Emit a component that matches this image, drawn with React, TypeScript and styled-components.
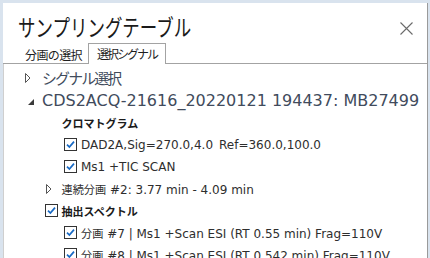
import React from "react";
import styled, { createGlobalStyle } from "styled-components";

const GlobalStyle = createGlobalStyle`
  html, body { margin: 0; padding: 0; }
  body {
    background: #d9e3ee;
    font-family: "DejaVu Sans", "Noto Sans CJK JP", sans-serif;
    overflow: hidden;
  }
`;

const Window = styled.div`
  margin: 3px 0 0 3px;
  width: 424px;
  height: 255px;
  background: #fff;
  border-right: 1px solid #9a9a9a;
  display: flex;
  flex-direction: column;
  overflow: hidden;
`;

const Header = styled.header`
  height: 40px;
  box-sizing: border-box;
  padding: 9px 14px 0 15px;
  display: flex;
  align-items: flex-start;
  justify-content: space-between;
`;

const Title = styled.h1`
  margin: 0;
  font: 400 23px/28px "Noto Sans CJK JP", sans-serif;
  color: #1a1a1a;
  transform: scaleX(0.76);
  transform-origin: left center;
`;

const CloseButton = styled.button`
  border: 0;
  background: none;
  padding: 0;
  margin-top: 9px;
  width: 14px;
  height: 14px;
  display: flex;
  align-items: center;
  justify-content: center;
`;

const TabStrip = styled.div`
  height: 21px;
  box-sizing: border-box;
  padding-left: 13px;
  display: flex;
  align-items: flex-end;
  border-bottom: 1px solid #a3a3a3;
`;

const Tab = styled.div<{ $active?: boolean }>`
  box-sizing: border-box;
  height: ${(p) => (p.$active ? "21px" : "19px")};
  margin-left: ${(p) => (p.$active ? "-3px" : "0")};
  margin-bottom: ${(p) => (p.$active ? "-1px" : "0")};
  padding: 0 8px;
  border: 1px solid ${(p) => (p.$active ? "#a3a3a3" : "transparent")};
  border-bottom: 0;
  background: #fff;
  font: 400 12px/19px "Noto Sans CJK JP", sans-serif;
  letter-spacing: ${(p) => (p.$active ? "-2px" : "-0.6px")};
  color: #1e1e1e;
  position: relative;
`;

const Tree = styled.ul`
  flex: 1;
  list-style: none;
  margin: 0;
  padding: 2.5px 0 0;
  border-left: 1px solid #cfcfcf;
  overflow: hidden;
`;

const Row = styled.li<{ $level: number; $top?: boolean }>`
  height: ${(p) => (p.$top ? "22.5px" : "22px")};
  padding-left: ${(p) => 18 + p.$level * 19.5}px;
  display: flex;
  align-items: center;
  white-space: nowrap;
  font-size: ${(p) => (p.$top ? "16px" : "12px")};
  color: ${(p) => (p.$top ? "#414b5c" : "#2e2e2e")};
`;

const Lead = styled.span`
  width: 20px;
  flex-shrink: 0;
  display: flex;
  align-items: center;
`;

const Heading = styled.span`
  font: 700 11px "Noto Sans CJK JP", sans-serif;
  color: #1a1a1a;
`;

const Ja = styled.span<{ $tight?: number }>`
  font-size: 0.93em;
  letter-spacing: ${(p) => p.$tight ?? 0}px;
`;

const Extra = styled.span`
  margin-left: 6px;
`;

const Box = styled.span`
  margin-left: 3px;
  width: 13px;
  height: 13px;
  box-sizing: border-box;
  border: 1px solid #333;
  background: #fff;
  display: flex;
  align-items: center;
  justify-content: center;
`;

const Check = () => (
  <Box>
    <svg width="11" height="11" viewBox="0 0 11 11">
      <path d="M2 5.6 L4.4 8 L9 2.6" fill="none" stroke="#1769c4" strokeWidth="1.7" />
    </svg>
  </Box>
);

const Collapsed = ({ x = 3 }: { x?: number }) => (
  <svg width="6" height="10" viewBox="0 0 6 10" style={{ marginLeft: x }}>
    <polygon points="0.5,0.5 5,5 0.5,9.5" fill="#fff" stroke="#555" strokeWidth="1" />
  </svg>
);

const Expanded = () => (
  <svg width="6" height="6" viewBox="0 0 6 6" style={{ marginLeft: 6, marginTop: 3 }}>
    <polygon points="6,0 6,6 0,6" fill="#3a3a3a" />
  </svg>
);

export default function App() {
  return (
    <>
      <GlobalStyle />
      <Window>
        <Header>
          <Title>サンプリングテーブル</Title>
          <CloseButton aria-label="閉じる">
            <svg width="13" height="13" viewBox="0 0 13 13">
              <path d="M0.5 0.5 L12.5 12.5 M12.5 0.5 L0.5 12.5" stroke="#6a6a6a" strokeWidth="1.1" />
            </svg>
          </CloseButton>
        </Header>
        <TabStrip>
          <Tab>分画の選択</Tab>
          <Tab $active>選択シグナル</Tab>
        </TabStrip>
        <Tree>
          <Row $level={0} $top>
            <Lead><Collapsed /></Lead>
            <Ja $tight={-1.8}>シグナル選択</Ja>
          </Row>
          <Row $level={0} $top>
            <Lead><Expanded /></Lead>
            <span>CDS2ACQ-21616_20220121 194437: MB27499</span>
          </Row>
          <Row $level={1}>
            <Lead />
            <Heading>クロマトグラム</Heading>
          </Row>
          <Row $level={2}>
            <Lead><Check /></Lead>
            <span>DAD2A,Sig=270.0,4.0</span>
            <Extra>Ref=360.0,100.0</Extra>
          </Row>
          <Row $level={2}>
            <Lead><Check /></Lead>
            <span>Ms1 +TIC SCAN</span>
          </Row>
          <Row $level={1}>
            <Lead><Collapsed x={4} /></Lead>
            <span><Ja>連続分画</Ja> #2: 3.77 min - 4.09 min</span>
          </Row>
          <Row $level={1}>
            <Lead><Check /></Lead>
            <Heading>抽出スペクトル</Heading>
          </Row>
          <Row $level={2}>
            <Lead><Check /></Lead>
            <span><Ja>分画</Ja> #7 | Ms1 +Scan ESI (RT 0.55 min) Frag=110V</span>
          </Row>
          <Row $level={2}>
            <Lead><Check /></Lead>
            <span><Ja>分画</Ja> #8 | Ms1 +Scan ESI (RT 0.542 min) Frag=110V</span>
          </Row>
        </Tree>
      </Window>
    </>
  );
}
